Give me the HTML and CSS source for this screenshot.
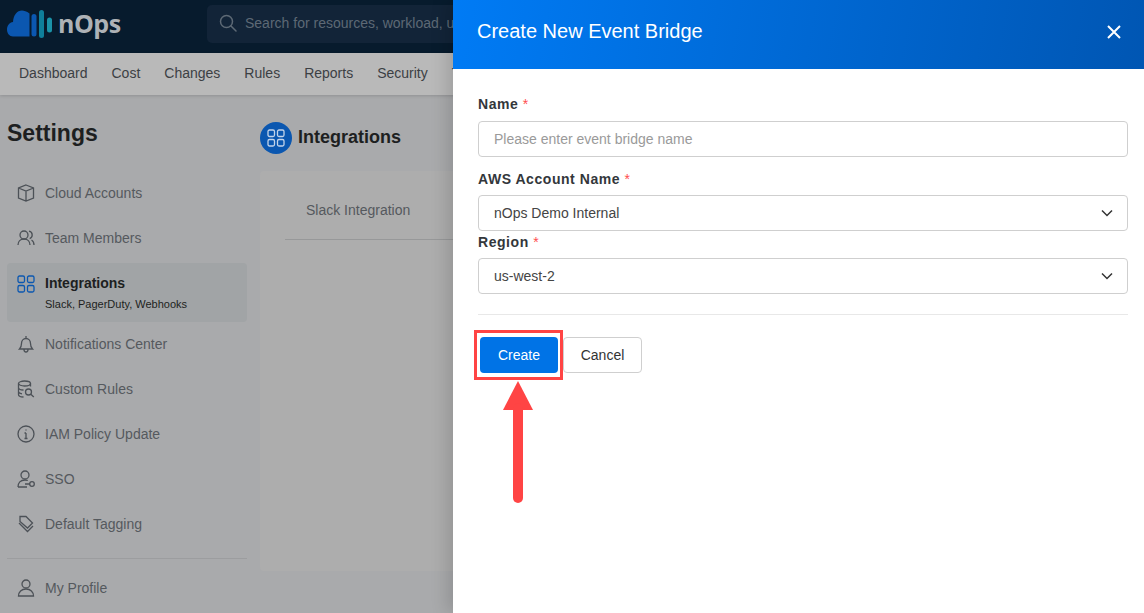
FILE: index.html
```html
<!DOCTYPE html>
<html lang="en">
<head>
    <meta charset="UTF-8">
    <meta name="viewport" content="width=device-width, initial-scale=1.0">
    <link rel="stylesheet" href="styles.css">
    <title>Create New Event Bridge</title>
</head>
<body>
    <header class="topbar">
        <div class="logo">
            <svg class="logo-mark" width="46" height="30" viewBox="0 0 46 30">
                <path d="M7 27.500C3.500 27.500 1 24.500 1 20.500c0-4 2.500-7 6-7.500C7.500 6 11 1.500 16 1.500c2 0 4.500.8 7.500 3v23z" fill="#0b57b0"/>
                <rect x="25.500" y="5" width="5" height="22.500" rx="2.500" fill="#0b57b0"/>
                <rect x="33" y="1" width="5" height="28" rx="2.500" fill="#0f7f9a"/>
                <rect x="41" y="8.500" width="5" height="15" rx="2.500" fill="#1b93a8"/>
            </svg>
            <span class="logo-text">nOps</span>
        </div>
        <div class="search">
            <svg width="18" height="18" viewBox="0 0 18 18" fill="none" stroke="#5d6975" stroke-width="1.500">
                <circle cx="7.500" cy="7.500" r="6"/>
                <path d="M12 12l5 5" stroke-linecap="round"/>
            </svg>
            <span class="search-text">Search for resources, workload, users</span>
        </div>
    </header>

    <nav class="menu">
        <a>Dashboard</a>
        <a>Cost</a>
        <a>Changes</a>
        <a>Rules</a>
        <a>Reports</a>
        <a>Security</a>
        <a>Tools</a>
    </nav>

    <div class="content">
        <aside class="sidebar">
            <h1 class="sidebar-title">Settings</h1>
            <ul class="side-list">
                <li class="side-item">
                    <svg class="side-icon" viewBox="0 0 18 18"><path d="M9 1l7.500 3v10L9 17l-7.500-3V4zM1.500 4L9 7l7.500-3M9 7v10"/></svg>
                    Cloud Accounts
                </li>
                <li class="side-item">
                    <svg class="side-icon" viewBox="0 0 18 18"><circle cx="7" cy="6" r="4"/><path d="M1 16c0-3.500 2.500-6 6-6s6 2.500 6 6M12 2.200c2 .4 3.200 2 3.200 3.800s-1 3-2.500 3.600M14.500 11c1.500.8 2.500 2.500 2.500 5"/></svg>
                    Team Members
                </li>
                <li class="side-item active">
                    <svg class="side-icon" viewBox="0 0 18 18"><rect x="1" y="1" width="6.500" height="6.500" rx="1.500"/><rect x="10.500" y="1" width="6.500" height="6.500" rx="1.500"/><rect x="1" y="10.500" width="6.500" height="6.500" rx="1.500"/><rect x="10.500" y="10.500" width="6.500" height="6.500" rx="1.500"/></svg>
                    <div>
                        <div class="active-name">Integrations</div>
                        <div class="active-sub">Slack, PagerDuty, Webhooks</div>
                    </div>
                </li>
                <li class="side-item">
                    <svg class="side-icon" viewBox="0 0 18 18"><path d="M2.500 14c1.500-1.500 2-2.500 2-5.500C4.500 5.500 6.500 3.500 9 3.500s4.500 2 4.500 5c0 3 .5 4 2 5.500zM9 1v2.500M7 14.500c0 1.500 1 2.500 2 2.500s2-1 2-2.500"/></svg>
                    Notifications Center
                </li>
                <li class="side-item">
                    <svg class="side-icon" viewBox="0 0 18 18"><ellipse cx="7.500" cy="3.500" rx="6" ry="2.500"/><path d="M1.500 3.500v11c0 1.500 2.500 2.500 5 2.500M13.500 3.500v3M1.500 7.500c0 1.500 2.500 2.500 5 2.500M1.500 11.500c0 1.300 1.500 2 3.500 2.300"/><circle cx="11.500" cy="12" r="3"/><path d="M13.800 14.300l3 2.700"/></svg>
                    Custom Rules
                </li>
                <li class="side-item">
                    <svg class="side-icon" viewBox="0 0 18 18"><circle cx="9" cy="9" r="8"/><path d="M9 8v5.500M7.500 8H9M7.500 13.500h3M9 4.500v1"/></svg>
                    IAM Policy Update
                </li>
                <li class="side-item">
                    <svg class="side-icon" viewBox="0 0 18 18"><circle cx="8" cy="5" r="4"/><path d="M1 17c0-4 2.500-7 7-7 1 0 2 .2 2.800.5M1 17h9M8 14h5"/><circle cx="15" cy="14" r="2.300"/></svg>
                    SSO
                </li>
                <li class="side-item">
                    <svg class="side-icon" viewBox="0 0 18 18"><path d="M3 1.500h6l6.500 6.500-5 5L3 6.500zM2 8l8.500 8.500L16 11"/></svg>
                    Default Tagging
                </li>
            </ul>
            <div class="side-divider"></div>
            <div class="side-item profile">
                <svg class="side-icon" viewBox="0 0 18 18"><circle cx="9" cy="5" r="4"/><path d="M1.500 17c0-4 3-7 7.500-7s7.500 3 7.500 7z"/></svg>
                My Profile
            </div>
        </aside>

        <main class="main">
            <div class="main-head">
                <span class="main-badge">
                    <svg width="18" height="18" viewBox="0 0 18 18" fill="none" stroke="#c3d4ea" stroke-width="1.300"><rect x="1" y="1" width="6.500" height="6.500" rx="1.500"/><rect x="10.500" y="1" width="6.500" height="6.500" rx="1.500"/><rect x="1" y="10.500" width="6.500" height="6.500" rx="1.500"/><rect x="10.500" y="10.500" width="6.500" height="6.500" rx="1.500"/></svg>
                </span>
                <h2 class="main-title">Integrations</h2>
            </div>
            <section class="card">
                <div class="tab-row">
                    <span class="tab">Slack Integration</span>
                </div>
            </section>
        </main>
    </div>

    <div class="drawer">
        <div class="drawer-head">
            <span class="drawer-title">Create New Event Bridge</span>
            <svg class="drawer-close" width="14" height="14" viewBox="0 0 14 14" stroke="#fff" stroke-width="2"><path d="M1 1l12 12M13 1L1 13"/></svg>
        </div>
        <form class="drawer-form">
            <label class="field-label" for="name">Name <span class="req">*</span></label>
            <input class="field" type="text" id="name" placeholder="Please enter event bridge name">

            <label class="field-label second">AWS Account Name <span class="req">*</span></label>
            <div class="field select">nOps Demo Internal
                <svg width="12" height="8" viewBox="0 0 12 8" fill="none" stroke="#333" stroke-width="1.500"><path d="M1 1.500l5 5 5-5"/></svg>
            </div>

            <label class="field-label third">Region <span class="req">*</span></label>
            <div class="field select">us-west-2
                <svg width="12" height="8" viewBox="0 0 12 8" fill="none" stroke="#333" stroke-width="1.500"><path d="M1 1.500l5 5 5-5"/></svg>
            </div>

            <div class="form-divider"></div>

            <div class="form-actions">
                <button class="btn btn-primary" type="button">Create</button>
                <button class="btn btn-plain" type="button">Cancel</button>
            </div>
        </form>
    </div>

    <!-- red annotation over the create button -->
    <div class="mark-box"></div>
    <svg class="mark-arrow" width="30" height="123" viewBox="0 0 30 123">
        <path d="M15 0L30 29H0z" fill="#ff4444"/>
        <path d="M15 27v90" stroke="#ff4444" stroke-width="10" stroke-linecap="round"/>
    </svg>
</body>
</html>
```

FILE: styles.css
```css
*{
    box-sizing: border-box;
    font-family: "Liberation Sans", Arial, sans-serif;
}
html, body{
    height: 100%;
}
body{
    margin: 0;
    height: 613px;
    overflow: hidden;
    background: #a9aaac;
    font-size: 14px;
}
.topbar{
    display: flex;
    align-items: center;
    height: 53px;
    background: #071b2d;
}
.logo{
    display: flex;
    align-items: center;
    width: 207px;
    padding-left: 6px;
}
.logo-mark{
    margin-bottom: 5px;
}
.logo-text{
    margin: 0 0 8px 6px;
    font-family: "Open Sans", sans-serif;
    font-size: 25px;
    font-weight: 700;
    letter-spacing: -0.5px;
    color: #aeb2b6;
}
.search{
    display: flex;
    align-items: center;
    gap: 8px;
    width: 400px;
    height: 38px;
    margin-top: -5px;
    padding: 0 0 2px 12px;
    border-radius: 5px;
    background: #122438;
}
.search-text{
    color: #5d6975;
    white-space: nowrap;
}
.menu{
    display: flex;
    align-items: center;
    gap: 24px;
    height: 42px;
    padding: 0 0 2px 19px;
    background: #b9b9b9;
    box-shadow: 0 1px 3px rgba(0, 0, 0, 0.15);
    color: #3c4044;
}
.content{
    display: flex;
}
.sidebar{
    width: 240px;
    margin-left: 7px;
}
.sidebar-title{
    margin: 25px 0 0;
    height: 51px;
    font-size: 23px;
    line-height: 27px;
    font-weight: 700;
    color: #1d1f21;
}
.side-list{
    margin: 0;
    padding: 0;
    list-style: none;
}
.side-item{
    display: flex;
    align-items: center;
    gap: 10px;
    height: 45px;
    padding: 0 0 2px 10px;
    color: #55595e;
}
.side-icon{
    flex: none;
    width: 18px;
    height: 18px;
    fill: none;
    stroke: #4c5157;
    stroke-width: 1.300;
}
.side-item.active{
    align-items: flex-start;
    height: 59px;
    margin-top: 2px;
    padding-top: 12px;
    border-radius: 4px;
    background: #a1a4a6;
}
.active .side-icon{
    stroke: #0b57b0;
}
.active-name{
    font-weight: 700;
    color: #1d1f21;
}
.active-sub{
    margin-top: 7px;
    font-size: 11px;
    color: #1d1f21;
}
.side-divider{
    height: 1px;
    margin-top: 11px;
    background: #9c9d9f;
}
.side-item.profile{
    margin-top: 7px;
}
.main{
    flex: 1;
    margin-left: 13px;
}
.main-head{
    display: flex;
    align-items: center;
    gap: 6px;
    height: 32px;
    margin: 27px 0 17px;
}
.main-badge{
    display: flex;
    align-items: center;
    justify-content: center;
    width: 32px;
    height: 32px;
    border-radius: 50%;
    background: #0b57b0;
}
.main-title{
    margin: 0 0 2px;
    font-size: 18px;
    font-weight: 700;
    color: #1d1f21;
}
.card{
    height: 400px;
    padding: 0 0 0 25px;
    border-radius: 4px;
    background: #adadad;
}
.tab-row{
    height: 69px;
    padding: 31px 0 0 21px;
    border-bottom: 1px solid #979899;
    color: #55595e;
}
.drawer{
    position: absolute;
    top: 0;
    right: 0;
    width: 691px;
    height: 613px;
    background: #fff;
    box-shadow: -6px 0 16px rgba(0, 0, 0, 0.14);
}
.drawer-head{
    display: flex;
    align-items: center;
    justify-content: space-between;
    height: 69px;
    padding: 0 23px 6px 24px;
    background: linear-gradient(100deg, #007bf5, #0056b3);
    color: #fff;
}
.drawer-title{
    font-size: 20px;
}
.drawer-form{
    padding: 27px 16px 0 25px;
}
.field-label{
    display: block;
    height: 25px;
    line-height: 17px;
    font-weight: 700;
    font-size: 14px;
    letter-spacing: 0.55px;
    color: #33373b;
}
.field-label.second{
    margin-top: 14px;
    height: 24px;
}
.field-label.third{
    height: 24px;
    margin-top: 3px;
}
.req{
    font-weight: 400;
    color: #ff4d4f;
}
.field{
    display: block;
    width: 100%;
    height: 36px;
    padding: 0 15px;
    border: 1px solid #cfcfcf;
    border-radius: 4px;
    background: #fff;
    font-size: 14px;
    line-height: 34px;
    color: #444;
}
.field::placeholder{
    color: #9a9a9a;
}
.select{
    display: flex;
    align-items: center;
    justify-content: space-between;
    padding-right: 14px;
}
.form-divider{
    height: 1px;
    margin-top: 20px;
    background: #e8e8e8;
}
.form-actions{
    display: flex;
    margin: 22px 0 0 2px;
}
.btn{
    height: 36px;
    border-radius: 4px;
    font-size: 14px;
}
.btn-primary{
    width: 78px;
    margin-right: 5px;
    border: 0;
    background: #0073e6;
    color: #fff;
}
.btn-plain{
    width: 79px;
    border: 1px solid #cfcfcf;
    background: #fff;
    color: #333;
}
.mark-box{
    position: absolute;
    left: 474px;
    top: 330px;
    width: 89px;
    height: 50px;
    border: 3px solid #ff4444;
}
.mark-arrow{
    position: absolute;
    left: 503px;
    top: 381px;
}
```
